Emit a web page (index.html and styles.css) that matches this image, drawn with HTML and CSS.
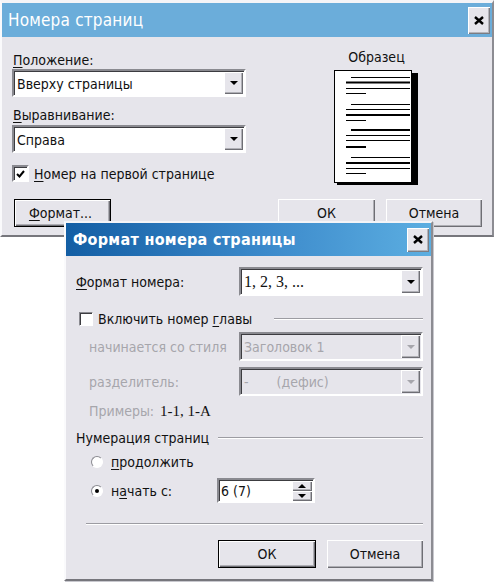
FILE: index.html
```html
<!DOCTYPE html>
<html lang="ru">
<head>
  <meta charset="UTF-8">
  <title>Номера страниц</title>
  <link rel="stylesheet" href="styles.css">
</head>
<body>
  <div class="desk">
    <!-- main dialog -->
    <section class="win win-main">
      <header class="title title-light">
        <span class="title-text">Номера страниц</span>
        <span class="close">
          <svg width="10" height="9" viewBox="0 0 10 9"><path d="M1 1 L9 8 M9 1 L1 8" stroke="#000" stroke-width="2.4"/></svg>
        </span>
      </header>
      <div class="main-body">
        <div class="main-left">
          <div class="lbl lbl-first"><u>П</u>оложение:</div>
          <div class="combo combo-wide"><span class="combo-text">Вверху страницы</span><span class="drop"><i class="arrow"></i></span></div>
          <div class="lbl lbl-second"><u>В</u>ыравнивание:</div>
          <div class="combo combo-wide combo-second"><span class="combo-text">Справа</span><span class="drop"><i class="arrow"></i></span></div>
          <div class="check-row">
            <span class="check">
              <svg width="9" height="8" viewBox="0 0 9 8"><path d="M1 4 L3.5 6.5 L8 1" stroke="#000" stroke-width="2" fill="none"/></svg>
            </span>
            <span><u>Н</u>омер на первой странице</span>
          </div>
        </div>
        <div class="main-right">
          <div class="sample-title">Образец</div>
          <svg class="sample" width="85" height="116" viewBox="0 0 85 116">
            <rect x="3" y="3" width="81" height="112" fill="#000"/>
            <rect x="0.5" y="0.5" width="77" height="112" fill="#fff" stroke="#000"/>
            <g stroke="#000">
              <path d="M17 7.5 H76 M12 18.5 H76 M12 23.5 H32" stroke-width="1"/>
              <path d="M12 12.5 H76" stroke-width="2"/>
              <path d="M17 34.5 H76 M12 39.5 H76 M12 50.5 H32" stroke-width="1"/>
              <path d="M12 45 H76" stroke-width="2"/>
              <path d="M12 65.5 H76 M12 70.5 H76" stroke-width="1"/>
              <path d="M17 60 H76 M12 77 H32" stroke-width="2"/>
              <path d="M17 87.5 H76 M12 98.5 H76 M12 103.5 H32" stroke-width="1"/>
              <path d="M12 93 H76" stroke-width="2"/>
            </g>
          </svg>
        </div>
      </div>
      <div class="main-buttons">
        <span class="btn btn-default btn-format"><span><u>Ф</u>ормат...</span></span>
        <span class="btn btn-ok-main">ОК</span>
        <span class="btn btn-cancel">Отмена</span>
      </div>
    </section>

    <!-- format dialog -->
    <section class="win win-format">
      <header class="title title-dark">
        <span class="title-text title-bold">Формат номера страницы</span>
        <span class="close close-small">
          <svg width="10" height="9" viewBox="0 0 10 9"><path d="M1 1 L9 8 M9 1 L1 8" stroke="#000" stroke-width="2.4"/></svg>
        </span>
      </header>
      <div class="fmt-body">
        <div class="row row-format">
          <span class="row-label"><u>Ф</u>ормат номера:</span>
          <div class="combo combo-fmt"><span class="combo-text serif">1, 2, 3, ...</span><span class="drop"><i class="arrow"></i></span></div>
        </div>
        <div class="group group-chapter">
          <span class="box"></span>
          <span>Включить номер <u>г</u>лавы</span>
          <span class="group-line"></span>
        </div>
        <div class="row row-dis row-style">
          <span class="row-label dis-label">начинается со стиля</span>
          <div class="combo combo-fmt combo-off"><span class="combo-text">Заголовок 1</span><span class="drop"><i class="arrow"></i></span></div>
        </div>
        <div class="row row-dis row-sep">
          <span class="row-label dis-label">разделитель:</span>
          <div class="combo combo-fmt combo-off"><span class="combo-text">-&nbsp;&nbsp;&nbsp;&nbsp;&nbsp;&nbsp;&nbsp;(дефис)</span><span class="drop"><i class="arrow"></i></span></div>
        </div>
        <div class="row row-examples">
          <span class="ex-label dis-label">Примеры:</span>
          <span class="serif">1-1, 1-А</span>
        </div>
        <div class="group group-numbering">
          <span>Нумерация страниц</span>
          <span class="group-line"></span>
        </div>
        <div class="radio-row radio-first">
          <span class="radio"></span>
          <span><u>п</u>родолжить</span>
        </div>
        <div class="radio-row radio-second">
          <span class="radio radio-on"></span>
          <span class="radio-text">н<u>а</u>чать с:</span>
          <div class="spin">
            <span class="spin-text">6 (7)</span>
            <span class="spin-btns">
              <span class="spin-btn"><i class="arrow arrow-up"></i></span>
              <span class="spin-btn"><i class="arrow"></i></span>
            </span>
          </div>
        </div>
        <div class="separator"></div>
        <div class="fmt-buttons">
          <span class="btn btn-default btn-ok"><span>ОК</span></span>
          <span class="btn btn-cancel-fmt">Отмена</span>
        </div>
      </div>
    </section>
  </div>
</body>
</html>
```

FILE: styles.css
```css
* {
  box-sizing: border-box;
}

body {
  margin: 0;
  background: #FFFFFF;
  font-family: 'DejaVu Sans Condensed', 'DejaVu Sans', sans-serif;
  font-size: 14px;
  color: #111111;
}

u {
  text-decoration: underline;
  text-underline-offset: 2px;
}

.desk {
  position: relative;
  width: 496px;
  height: 582px;
  overflow: hidden;
}

.win {
  position: absolute;
  display: flex;
  flex-direction: column;
  background: #E6E5EB;
  border-style: solid;
  border-color: #F4F4F7 #8C8C92 #76767C #FAFAFC;
}

.win-main {
  left: 0;
  top: 0;
  width: 494px;
  height: 237px;
  border-width: 3px 2px 2px 2px;
}

.win-format {
  left: 64px;
  top: 221px;
  width: 369px;
  height: 360px;
  border-width: 2px 2px 2px 2px;
  box-shadow: 1px 1px 0 #C8C8CE;
}

/* title bars */
.title {
  display: flex;
  align-items: center;
  justify-content: space-between;
  color: #FFFFFF;
  flex: none;
}

.title-light {
  height: 34px;
  padding: 0 2px 0 6px;
  background: #6BADDA;
}

.title-dark {
  height: 33px;
  padding: 0 2px 0 7px;
  background: linear-gradient(to right, #135EA4, #3C8ACB 55%, #5CAEE1);
}

.title-text {
  font-size: 17px;
  letter-spacing: 0.2px;
}

.title-bold {
  font-weight: bold;
  font-size: 16px;
  letter-spacing: 0.3px;
}

.close {
  width: 22px;
  height: 27px;
  display: flex;
  align-items: center;
  justify-content: center;
  background: #E6E5EB;
  box-shadow: inset 1px 1px #FFFFFF, inset -1px -1px #7C7C82, inset -2px -2px #B4B4BA;
}

.close-small {
  height: 24px;
}

/* 3d controls */
.combo {
  display: flex;
  align-items: center;
  justify-content: space-between;
  background: #FFFFFF;
  border: 2px solid;
  border-color: #8A8A90 #FFFFFF #FFFFFF #8A8A90;
  box-shadow: inset 1px 1px #3C3C40;
  padding: 0 1px 0 3px;
}

.combo-text {
  font-size: 14px;
  padding-top: 1px;
}

.drop, .spin-btn {
  display: flex;
  align-items: center;
  justify-content: center;
  background: #E6E5EB;
  box-shadow: inset 1px 1px #FFFFFF, inset -1px -1px #6E6E74, inset -2px -2px #B0B0B6;
}

.drop {
  width: 19px;
  height: 22px;
}

.arrow {
  width: 0;
  height: 0;
  border-left: 4px solid transparent;
  border-right: 4px solid transparent;
  border-top: 4px solid #000000;
}

.arrow-up {
  border-top: none;
  border-bottom: 4px solid #000000;
}

.btn {
  display: flex;
  align-items: center;
  justify-content: center;
  height: 28px;
  background: #E6E5EB;
  box-shadow: inset 1px 1px #FFFFFF, inset -1px -1px #6E6E74, inset -2px -2px #AEAEB4;
  font-size: 14px;
}

.btn-default {
  border: 1px solid #000000;
}

/* main dialog */
.main-body {
  display: flex;
  height: 162px;
}

.main-left {
  width: 245px;
  padding-left: 10px;
}

.lbl {
  height: 16px;
  line-height: 16px;
  padding-left: 1px;
}

.lbl-first {
  margin-top: 15px;
}

.lbl-second {
  margin-top: 10px;
}

.combo-wide {
  width: 234px;
  height: 28px;
  margin-top: 1px;
}

.combo-second {
  margin-top: 2px;
}

.check-row {
  display: flex;
  align-items: center;
  gap: 5px;
  margin-top: 12px;
  height: 17px;
}

.check {
  width: 17px;
  height: 17px;
  display: flex;
  align-items: center;
  justify-content: center;
  background: #FFFFFF;
  border: 2px solid;
  border-color: #8A8A90 #FFFFFF #FFFFFF #8A8A90;
  box-shadow: inset 1px 1px #3C3C40;
}

.main-right {
  margin-left: 87px;
  display: flex;
  flex-direction: column;
  align-items: center;
  width: 85px;
}

.sample-title {
  margin-top: 12px;
  height: 16px;
  line-height: 16px;
}

.sample {
  margin-top: 5px;
  display: block;
}

.main-buttons {
  display: flex;
  padding: 0 10px 0 12px;
}

.btn-format {
  width: 97px;
}

.btn-format span {
  margin-left: -4px;
}

.btn-ok-main {
  width: 97px;
  margin-left: auto;
}

.btn-cancel {
  width: 96px;
  margin-left: 11px;
}

/* format dialog */
.fmt-body {
  padding: 0 8px 0 10px;
  display: flex;
  flex-direction: column;
}

.row {
  display: flex;
  align-items: center;
}

.row-label {
  width: 163px;
}

.row-format {
  margin-top: 11px;
}

.combo-fmt {
  width: 184px;
  height: 29px;
}

.combo-fmt .drop {
  height: 23px;
}

.serif {
  font-family: 'Liberation Serif', serif;
  font-size: 16px;
}

.group {
  display: flex;
  align-items: center;
  height: 16px;
}

.group-chapter {
  margin-top: 15px;
  padding-left: 3px;
}

.box {
  width: 14px;
  height: 14px;
  margin-right: 5px;
  background: #FFFFFF;
  border: 1px solid;
  border-color: #8A8A90 #FFFFFF #FFFFFF #8A8A90;
  box-shadow: inset 1px 1px #3C3C40;
}

.group-line {
  flex: 1;
  height: 2px;
  margin-left: 22px;
  border-top: 1px solid #9C9CA2;
  border-bottom: 1px solid #FFFFFF;
}

.group-numbering .group-line {
  margin-left: 9px;
}

.row-dis {
  padding-left: 13px;
}

.row-dis .row-label {
  width: 150px;
}

.dis-label {
  color: #A6A6AC;
}

.row-style {
  margin-top: 5px;
}

.row-sep {
  margin-top: 6px;
}

.combo-off {
  background: #E6E5EB;
  color: #A6A6AC;
}

.combo-off .arrow {
  border-top-color: #A6A6AC;
}

.row-examples {
  margin-top: 7px;
  padding-left: 13px;
  height: 16px;
}

.ex-label {
  width: 71px;
}

.row-examples .serif {
  font-size: 15px;
}

.group-numbering {
  margin-top: 11px;
}

.radio-row {
  display: flex;
  align-items: center;
  padding-left: 15px;
}

.radio-first {
  margin-top: 8px;
  height: 16px;
}

.radio-second {
  margin-top: 8px;
  height: 25px;
}

.radio {
  width: 12px;
  height: 12px;
  border-radius: 50%;
  margin-right: 8px;
  background: #FFFFFF;
  border: 1px solid;
  border-color: #8A8A90 #FFFFFF #FFFFFF #8A8A90;
  position: relative;
}

.radio-on::after {
  content: "";
  position: absolute;
  left: 3px;
  top: 3px;
  width: 4px;
  height: 4px;
  border-radius: 50%;
  background: #000000;
}

.radio-text {
  width: 106px;
}

.spin {
  display: flex;
  align-items: center;
  justify-content: space-between;
  width: 98px;
  height: 25px;
  background: #FFFFFF;
  border: 2px solid;
  border-color: #8A8A90 #FFFFFF #FFFFFF #8A8A90;
  box-shadow: inset 1px 1px #3C3C40;
  padding: 0 1px 0 2px;
}

.spin-btns {
  display: flex;
  flex-direction: column;
}

.spin-btn {
  width: 20px;
  height: 10px;
}

.separator {
  margin: 20px 0 0 10px;
  height: 2px;
  border-top: 1px solid #9C9CA2;
  border-bottom: 1px solid #FFFFFF;
}

.fmt-buttons {
  display: flex;
  justify-content: flex-end;
  gap: 11px;
  margin-top: 15px;
}

.btn-ok {
  width: 98px;
}

.btn-cancel-fmt {
  width: 96px;
}
```
